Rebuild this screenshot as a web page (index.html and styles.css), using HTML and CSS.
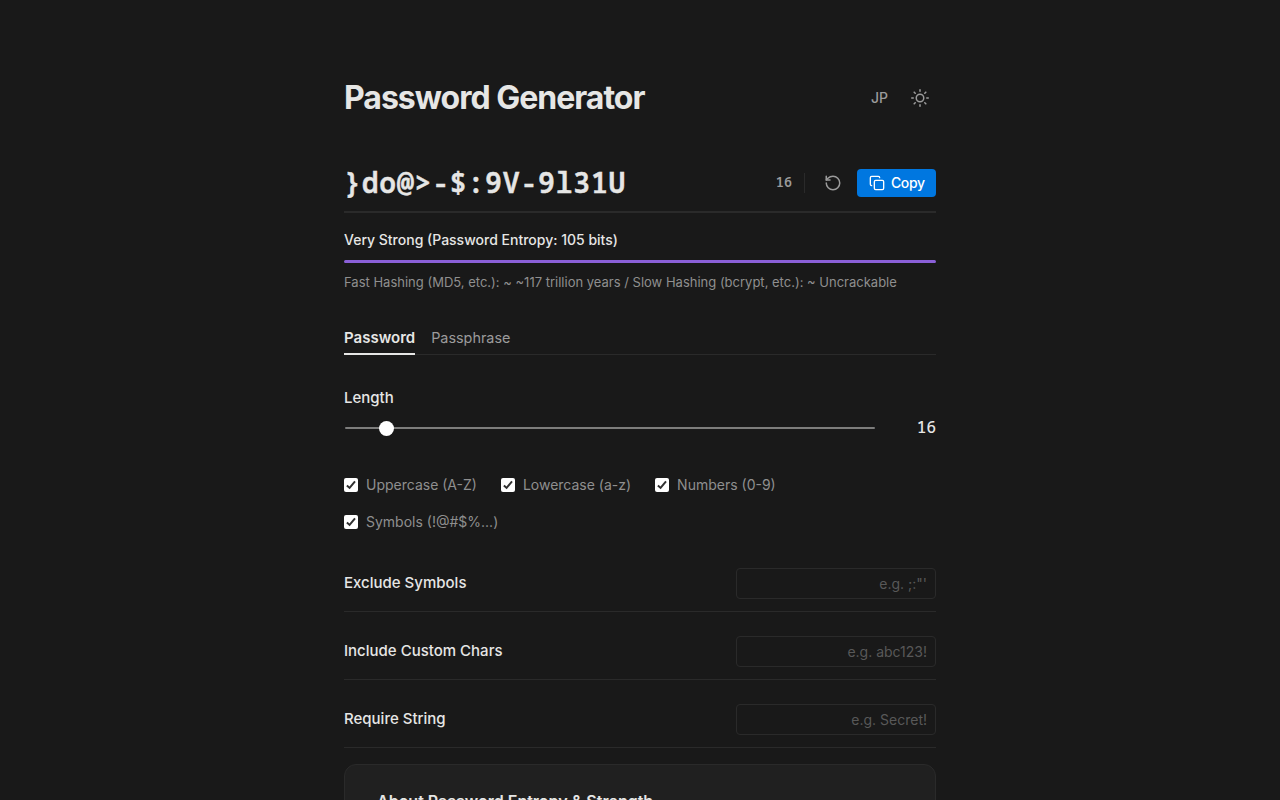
FILE: index.html
```html
<!DOCTYPE html>
<html lang="en">
<head>
<meta charset="utf-8">
<title>Password Generator</title>
<link rel="stylesheet" href="styles.css">
</head>
<body>
<main class="page">
  <header class="header">
    <h1 class="title">Password Generator</h1>
    <div class="header-actions">
      <button class="lang">JP</button>
      <button class="theme" aria-label="Theme">
        <svg class="icon" width="18" height="18" viewBox="0 0 24 24"><circle cx="12" cy="12" r="5"/><path d="M12 1v2M12 21v2M4.22 4.22l1.42 1.42M18.36 18.36l1.42 1.42M1 12h2M21 12h2M4.22 19.78l1.42-1.42M18.36 5.64l1.42-1.42"/></svg>
      </button>
    </div>
  </header>

  <section class="output">
    <div class="password">}do@&gt;-$:9V-9l31U</div>
    <span class="count">16</span>
    <button class="refresh" aria-label="Regenerate">
      <svg class="icon" width="18" height="18" viewBox="0 0 24 24"><path d="M3 12a9 9 0 1 0 9-9 9.75 9.75 0 0 0-6.74 2.74L3 8"/><path d="M3 3v5h5"/></svg>
    </button>
    <button class="copy">
      <svg class="icon" width="16" height="16" viewBox="0 0 24 24"><rect x="8" y="8" width="14" height="14" rx="2"/><path d="M4 16c-1.1 0-2-.9-2-2V4c0-1.100.9-2 2-2h10c1.100 0 2 .9 2 2"/></svg>
      <span>Copy</span>
    </button>
  </section>

  <section class="strength">
    <div class="strength-label">Very Strong (Password Entropy: 105 bits)</div>
    <div class="meter"></div>
    <div class="crack">Fast Hashing (MD5, etc.): ~ ~117 trillion years / Slow Hashing (bcrypt, etc.): ~ Uncrackable</div>
  </section>

  <nav class="tabs">
    <button class="tab tab-active">Password</button>
    <button class="tab">Passphrase</button>
  </nav>

  <label class="length-label" for="length">Length</label>
  <div class="slider">
    <input class="range" id="length" type="range" min="8" max="128" value="16">
    <span class="slider-value">16</span>
  </div>

  <div class="checks">
    <label class="check"><span class="box"><svg width="14" height="14" viewBox="0 0 14 14"><path d="M2.900 7.400l2.700 2.500 5.400-6.500"/></svg></span>Uppercase (A-Z)</label>
    <label class="check"><span class="box"><svg width="14" height="14" viewBox="0 0 14 14"><path d="M2.900 7.400l2.700 2.500 5.400-6.500"/></svg></span>Lowercase (a-z)</label>
    <label class="check"><span class="box"><svg width="14" height="14" viewBox="0 0 14 14"><path d="M2.900 7.400l2.700 2.500 5.400-6.500"/></svg></span>Numbers (0-9)</label>
    <label class="check"><span class="box"><svg width="14" height="14" viewBox="0 0 14 14"><path d="M2.900 7.400l2.700 2.500 5.400-6.500"/></svg></span>Symbols (!@#$%...)</label>
  </div>

  <div class="fields">
    <div class="field"><span class="field-label">Exclude Symbols</span><input class="text" placeholder="e.g. ;:&quot;'"></div>
    <div class="field"><span class="field-label">Include Custom Chars</span><input class="text" placeholder="e.g. abc123!"></div>
    <div class="field"><span class="field-label">Require String</span><input class="text" placeholder="e.g. Secret!"></div>
  </div>

  <section class="about">
    <h2 class="about-title">About Password Entropy &amp; Strength</h2>
  </section>
</main>
</body>
</html>
```
FILE: styles.css
```css
* { box-sizing: border-box; }
html, body { height: 100%; overflow: hidden; }
body {
  margin: 0;
  background: #191919;
  color: #e6e6e5;
  font-family: Inter, "Liberation Sans", sans-serif;
  font-size: 15px;
}
button {
  display: flex;
  align-items: center;
  padding: 0;
  border: 0;
  background: none;
  color: #9b9b9b;
  font: inherit;
}
.icon {
  display: block;
  fill: none;
  stroke: currentColor;
  stroke-width: 2;
  stroke-linecap: round;
  stroke-linejoin: round;
}
.page { width: 592px; height: 800px; margin: 0 auto; padding-top: 78px; overflow: hidden; }
.header { display: flex; justify-content: space-between; align-items: center; height: 40px; }
.title { margin: 0; font-size: 32px; font-weight: 700; letter-spacing: -1px; line-height: 40px; }
.header-actions { display: flex; align-items: center; gap: 23px; padding-right: 7px; }
.lang { padding-bottom: 1px; font-size: 14px; font-weight: 500; }
.output {
  display: flex;
  align-items: center;
  height: 60px;
  margin-top: 35px;
  padding-top: 2px;
  border-bottom: 2px solid #2a2a2a;
}
.password {
  flex: 1;
  padding-bottom: 2px;
  font-family: "Noto Sans Mono", "DejaVu Sans Mono", monospace;
  font-size: 28px;
  font-weight: 600;
  letter-spacing: 0.84px;
  -webkit-text-stroke: 0.5px currentColor;
}
.count {
  height: 20px;
  padding-right: 12px;
  border-right: 1px solid #2a2a2a;
  color: #9b9b9b;
  font-family: "Noto Sans Mono", "DejaVu Sans Mono", monospace;
  font-size: 13.5px;
  font-weight: 600;
  line-height: 19px;
}
.refresh { margin: 0 15px 0 19px; }
.copy {
  gap: 6px;
  width: 79px;
  height: 28px;
  padding: 0 0 1px 12px;
  border-radius: 4px;
  background: #0077e0;
  color: #fff;
  font-size: 14px;
  font-weight: 500;
  letter-spacing: -0.4px;
}
.copy .icon { position: relative; top: 0.5px; }
.strength-label { margin-top: 17px; font-size: 14px; font-weight: 500; line-height: 20px; }
.meter { height: 3px; margin-top: 10px; border-radius: 2px; background: #8b60d8; }
.crack { margin-top: 9px; color: #8f8f8f; font-size: 13px; line-height: 20px; }
.tabs { display: flex; gap: 16px; height: 30px; margin-top: 33px; border-bottom: 1px solid #2a2a2a; }
.tab { height: 30px; padding-bottom: 3px; border-bottom: 2px solid transparent; font-size: 14.4px; }
.tab-active { border-bottom-color: #e6e6e5; color: #e6e6e5; font-weight: 600; font-size: 15px; }
.length-label { display: block; margin-top: 32px; font-weight: 500; line-height: 22px; }
.slider { display: flex; align-items: center; justify-content: space-between; height: 24px; margin-top: 7px; }
.range { appearance: none; width: 530px; height: 16px; margin: 0 0 0 1px; background: none; }
.range::-webkit-slider-runnable-track { height: 2px; border-radius: 1px; background: #7d7d7c; }
.range::-webkit-slider-thumb {
  appearance: none;
  width: 15px;
  height: 15px;
  margin-top: -6.5px;
  border-radius: 50%;
  background: #fff;
}
.slider-value { padding-bottom: 2px; font-family: "Noto Sans Mono", "DejaVu Sans Mono", monospace; font-size: 16px; font-weight: 500; }
.checks { display: flex; flex-wrap: wrap; gap: 15px 24px; margin-top: 34px; color: #8f8f8f; font-size: 14px; line-height: 22px; }
.check { display: flex; align-items: center; gap: 8px; }
.box { width: 14px; height: 14px; border-radius: 2px; background: #fff; }
.box svg { display: block; fill: none; stroke: #303030; stroke-width: 2; }
.fields { margin-top: 23px; }
.field {
  display: flex;
  justify-content: space-between;
  align-items: center;
  height: 68px;
  padding-top: 12px;
  border-bottom: 1px solid #2a2a2a;
  font-weight: 500;
}
.field:first-child { height: 56px; padding-top: 0; }
.field-label { padding-bottom: 2px; }
.text {
  width: 200px;
  height: 31px;
  padding: 0 8px;
  border: 1px solid #2a2a2a;
  border-radius: 4px;
  background: none;
  font: 14px Inter, sans-serif;
  text-align: right;
}
.text::placeholder { color: #585858; }
.about { height: 200px; margin-top: 16px; padding: 25px 33px; border: 1px solid #2a2a2a; border-radius: 12px; background: #202020; }
.about-title { margin: 0 0 0 -1px; font-size: 16px; font-weight: 600; line-height: 22px; }
```
